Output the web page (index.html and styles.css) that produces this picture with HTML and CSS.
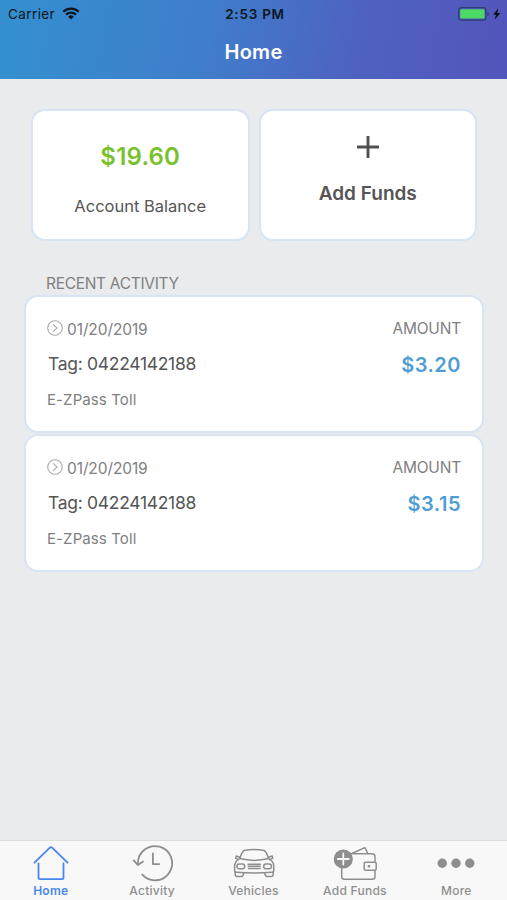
FILE: index.html
```html
<!DOCTYPE html>
<html lang="en">
<head>
    <meta charset="UTF-8">
    <meta name="viewport" content="width=device-width, initial-scale=1">
    <title>Home</title>
    <link rel="stylesheet" href="styles.css">
</head>
<body>
    <!--status bar + title-->
    <header class="header">
        <div class="status-bar">
            <div class="status-left">
                <span class="carrier">Carrier</span>
                <svg class="wifi" viewBox="0 0 18 13" width="18" height="13">
                    <path d="M1.3 4.7a11 11 0 0 1 15.4 0M4.1 7.6a7 7 0 0 1 9.8 0" fill="none" stroke="#0b1620" stroke-width="2.3"/>
                    <path d="M9 12.5 6.2 9.7a4 4 0 0 1 5.6 0z" fill="#0b1620"/>
                </svg>
            </div>
            <span class="time">2:53 PM</span>
            <div class="status-right">
                <svg viewBox="0 0 44 14" width="44" height="14">
                    <rect x=".7" y=".7" width="27.2" height="12.4" rx="2.6" fill="none" stroke="#2b3d72" stroke-width="1.2"/>
                    <rect x="2.2" y="2.2" width="24.3" height="9.4" rx="1.2" fill="#4cd964"/>
                    <path d="M29.4 5v4q1.6-.6 1.6-2t-1.6-2z" fill="#2b3d72"/>
                    <path d="M40.3 1.2 35.1 7.8h3l-1.5 5 5.8-6.8h-3.2z" fill="#080c18"/>
                </svg>
            </div>
        </div>
        <h1 class="title">Home</h1>
    </header>

    <main class="content">
        <section class="summary">
            <div class="card balance">
                <div class="balance-value">$19.60</div>
                <div class="balance-label">Account Balance</div>
            </div>
            <div class="card add-funds">
                <svg class="plus" viewBox="0 0 22 22" width="22" height="22">
                    <path d="M11 0v22M0 11h22" stroke="#505050" stroke-width="2.9"/>
                </svg>
                <div class="add-label">Add Funds</div>
            </div>
        </section>

        <h2 class="section-title">RECENT ACTIVITY</h2>

        <section class="activity">
            <div class="card item">
                <div class="details">
                    <div class="date">
                        <svg viewBox="0 0 16 16" width="16" height="16">
                            <circle cx="8" cy="8" r="7.3"/>
                            <path d="m6.2 4.4 3.8 3.6-3.8 3.6"/>
                        </svg>
                        <span>01/20/2019</span>
                    </div>
                    <div class="tag">Tag: 04224142188</div>
                    <div class="type">E-ZPass Toll</div>
                </div>
                <div class="amount">
                    <div class="amount-label">AMOUNT</div>
                    <div class="amount-value">$3.20</div>
                </div>
            </div>
            <div class="card item">
                <div class="details">
                    <div class="date">
                        <svg viewBox="0 0 16 16" width="16" height="16">
                            <circle cx="8" cy="8" r="7.3"/>
                            <path d="m6.2 4.4 3.8 3.6-3.8 3.6"/>
                        </svg>
                        <span>01/20/2019</span>
                    </div>
                    <div class="tag">Tag: 04224142188</div>
                    <div class="type">E-ZPass Toll</div>
                </div>
                <div class="amount">
                    <div class="amount-label">AMOUNT</div>
                    <div class="amount-value">$3.15</div>
                </div>
            </div>
        </section>
    </main>

    <!--bottom tabs-->
    <nav class="tabs">
        <a class="tab active">
            <svg viewBox="0 0 44 38" width="44" height="38">
                <path d="M5.5 21.7 20.6 6.9q1.4-1.4 2.8 0l15.1 14.8M9.5 22.5v14q0 1.6 1.6 1.6h21.8q1.6 0 1.6-1.6v-14"/>
            </svg>
            <span>Home</span>
        </a>
        <a class="tab">
            <svg viewBox="0 0 44 38" width="44" height="38">
                <path d="M7.9 22.7A17.1 17.1 0 1 1 12.3 33.7"/>
                <path d="m3.7 19.4 4.3 4.7 5-3.6M22.9 12.5v10.6h6.4"/>
            </svg>
            <span>Activity</span>
        </a>
        <a class="tab">
            <svg viewBox="0 0 44 38" width="44" height="38" class="car">
                <path d="M7.8 17.6Q9.6 11.4 12 9.6q10-2.4 20.4 0 2.4 1.8 4.2 8-14.4 3.6-28.8 0zM7.8 17.6Q2.6 20.2 2.6 25.4v4q0 1.8 2 1.8 17.6 1.6 35.2 0 2 0 2-1.8v-4q0-5.2-5.2-7.8"/>
                <path d="M8 16.2 4.2 15l-.6 2.2 2.8 1.4M36.4 16.2l3.8-1.2.6 2.2-2.8 1.4M3.2 31v2.2q0 2.3 2 2.3h4q1.8 0 2.1-2.1l.4-1.6M41.2 31v2.2q0 2.3-2 2.3h-4q-1.8 0-2.1-2.1l-.4-1.6"/>
                <rect x="4.9" y="23.1" width="7.8" height="4.6" rx="2.3"/>
                <rect x="31.7" y="23.1" width="7.8" height="4.6" rx="2.3"/>
                <path d="M16 23.2h12.4M16.2 25.3h12M16.4 27.4h11.6"/>
            </svg>
            <span>Vehicles</span>
        </a>
        <a class="tab">
            <svg viewBox="0 0 44 38" width="44" height="38" class="wallet">
                <path d="M8.7 15v20.5q0 2.8 2.8 2.8h27.7q2.8 0 2.8-2.8V29.5M42 21v-5.2q0-3-2.8-3H18M19.5 12.3l12.4-5.7 3 5.9"/>
                <rect x="31.2" y="21.3" width="12" height="8" rx="1.2"/>
                <circle cx="36" cy="25.3" r="1.3" class="solid"/>
                <circle cx="10.3" cy="18" r="9.6" class="solid"/>
                <path d="M10.3 12.5v11M4.8 18h11" class="light"/>
            </svg>
            <span>Add Funds</span>
        </a>
        <a class="tab">
            <svg viewBox="0 0 44 38" width="44" height="38">
                <circle cx="8.2" cy="22.3" r="4.7" class="solid"/>
                <circle cx="22" cy="22.3" r="4.7" class="solid"/>
                <circle cx="35.8" cy="22.3" r="4.7" class="solid"/>
            </svg>
            <span>More</span>
        </a>
    </nav>
</body>
</html>
```
FILE: styles.css
```css
* {
    box-sizing: border-box;
}

body {
    margin: 0;
    height: 100vh;
    display: flex;
    flex-direction: column;
    background-color: #e9ebec;
    color: #555;
    font-family: Inter, 'Liberation Sans', sans-serif;
}

h1, h2 {
    margin: 0;
}

.header {
    height: 79px;
    background: linear-gradient(100deg, #3390d0 0%, #3f7ecb 40%, #4e62c0 70%, #5355bb 100%);
}

.status-bar {
    display: grid;
    grid-template-columns: 1fr auto 1fr;
    align-items: center;
    height: 27px;
    padding: 0 5px 0 8px;
    color: #0b1620;
    font-size: 13.5px;
}

.status-left {
    display: flex;
    align-items: center;
    gap: 7px;
}

.carrier {
    letter-spacing: 0.4px;
}

.time {
    font-weight: 600;
    letter-spacing: 0.75px;
}

.status-right {
    display: flex;
    justify-content: flex-end;
}

.title {
    line-height: 50px;
    text-align: center;
    font-size: 20px;
    font-weight: 600;
    letter-spacing: 0.25px;
    color: #fff;
}

.content {
    flex: 1;
    padding: 30px 23px 0 24px;
}

.card {
    background-color: #fff;
    border: 2px solid #d8e4f4;
    border-radius: 14px;
}

.summary {
    display: flex;
    gap: 9px;
    padding: 0 7px;
}

.summary .card {
    flex: 1;
    height: 132px;
    display: flex;
    flex-direction: column;
    align-items: center;
}

.balance-value {
    margin-top: 31px;
    line-height: 30px;
    font-size: 24px;
    font-weight: 600;
    letter-spacing: 0.2px;
    color: #78c22d;
}

.balance-label {
    margin-top: 22px;
    line-height: 24px;
    font-size: 16.5px;
}

.plus {
    margin-top: 25px;
}

.add-label {
    margin-top: 24px;
    line-height: 24px;
    font-size: 19px;
    font-weight: 600;
}

.section-title {
    margin: 33px 0 1px 22px;
    line-height: 20px;
    font-size: 15.5px;
    font-weight: 400;
    letter-spacing: -0.3px;
    color: #808080;
}

.activity {
    display: flex;
    flex-direction: column;
    gap: 1px;
}

.item {
    display: flex;
    justify-content: space-between;
    height: 138px;
    padding: 21px 21px 0 21px;
}

.date {
    display: flex;
    align-items: center;
    gap: 4px;
    height: 22px;
    font-size: 15.5px;
    letter-spacing: -0.1px;
    color: #808080;
}

.date svg {
    margin-top: -2px;
    fill: none;
    stroke: #aaa;
    stroke-width: 1.1;
}

.tag {
    margin-top: 12px;
    line-height: 24px;
    padding-left: 1px;
    font-size: 17.5px;
    letter-spacing: -0.3px;
}

.type {
    margin-top: 13px;
    line-height: 22px;
    font-size: 15px;
    letter-spacing: 0.1px;
    color: #808080;
}

.amount {
    padding-top: 1px;
    text-align: right;
    color: #808080;
}

.amount-label {
    line-height: 20px;
    font-size: 15.5px;
    letter-spacing: -0.2px;
}

.amount-value {
    margin-top: 13px;
    line-height: 26px;
    font-size: 20px;
    font-weight: 600;
    letter-spacing: 0.5px;
    color: #4f9dd3;
}

.tabs {
    display: flex;
    height: 60px;
    border-top: 1px solid #dcdddf;
    background-color: #f8f8f8;
}

.tab {
    flex: 1;
    display: flex;
    flex-direction: column;
    align-items: center;
    color: #8e8e8e;
    font-size: 12px;
    font-weight: 500;
    letter-spacing: 0.25px;
}

.tab span {
    margin-top: 4px;
    line-height: 16px;
}

.tab svg {
    fill: none;
    stroke: currentColor;
    stroke-width: 1.8;
    stroke-linecap: round;
    stroke-linejoin: round;
    overflow: visible;
}

.tab svg.car,
.tab svg.wallet {
    stroke-width: 1.5;
}

.tab .solid {
    fill: currentColor;
    stroke: none;
}

.tab .light {
    stroke: #f8f8f8;
    stroke-width: 1.8;
}

.active {
    color: #4a86f0;
    font-weight: 600;
}
```
